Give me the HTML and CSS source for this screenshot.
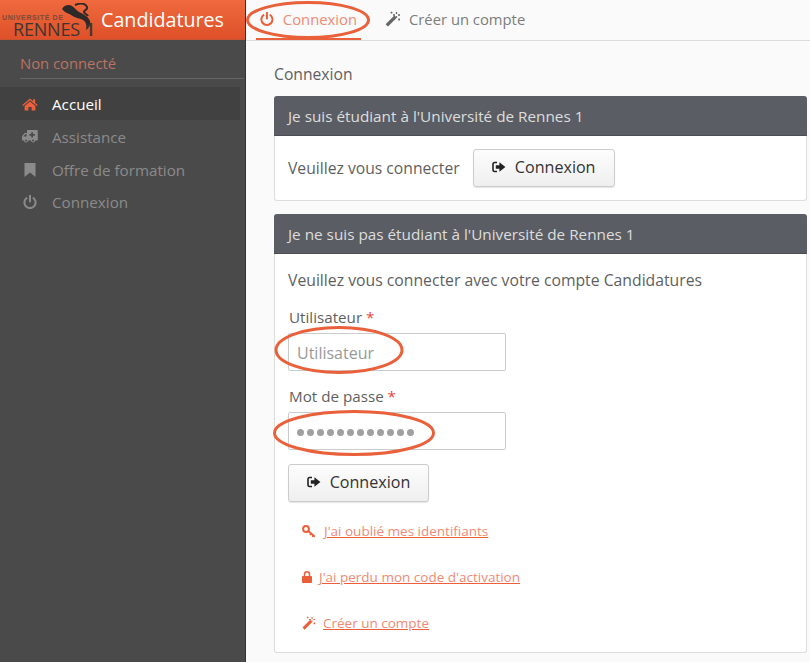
FILE: index.html
```html
<!DOCTYPE html>
<html lang="fr">
<head>
<meta charset="utf-8">
<title>Candidatures - Connexion</title>
<link rel="stylesheet" href="styles.css">
</head>
<body>
<svg class="sprites" width="0" height="0" aria-hidden="true">
  <symbol id="i-power" viewBox="0 0 14 14"><path d="M4.2 2.6A5.6 5.6 0 1 0 9.8 2.6" fill="none" stroke="currentColor" stroke-width="2"/><path d="M7 .4V6.6" fill="none" stroke="currentColor" stroke-width="2" stroke-linecap="round"/></symbol>
  <symbol id="i-wand" viewBox="0 0 16 16"><path d="M1.800 14.400 10.600 5.600" fill="none" stroke="currentColor" stroke-width="3.400"/><path d="M11.500 1v2M11.500 5v1.500M8 4h2M13 4h2M14 7.500v2M6.500.8v1.800M5.600 1.700h1.800M13.200 8.500h1.800" fill="none" stroke="currentColor" stroke-width="1.300"/></symbol>
  <symbol id="i-signin" viewBox="0 0 14 12"><path d="M5 1.500H2.600C1.600 1.500 1 2.200 1 3.100v5.800c0 .9.6 1.600 1.600 1.600H5" fill="none" stroke="currentColor" stroke-width="1.600"/><path d="M3.800 4.200H7.400V1.200L13.400 6 7.400 10.800V7.800H3.800Z" fill="currentColor"/></symbol>
  <symbol id="i-home" viewBox="0 0 16 13"><path d="M8 .5.3 6.900l.8 1L8 2.300l6.900 5.600.8-1-2.600-2.100V1.200h-2v2Z" fill="currentColor"/><path d="M2.600 8 8 3.600 13.400 8v4.600H9.600V9H6.400v3.600H2.600Z" fill="currentColor"/></symbol>
  <symbol id="i-ambulance" viewBox="0 0 16 13"><path d="M5 0h9.600c.7 0 1.200.5 1.200 1.200v8.600c0 .4-.3.7-.7.7h-2a2 2 0 0 1-4 0H6a2 2 0 0 1-4 0H.8A.8.8 0 0 1 0 9.700V6.300L2.600 3H5Z" fill="currentColor"/><path d="M9.200 2.200h1.800V4h1.800v1.800H11v1.800H9.200V5.800H7.400V4h1.800Z" fill="#4a4a4a"/><path d="M1.500 6.400 3.100 4.300H4.600V6.400Z" fill="#4a4a4a"/><circle cx="4" cy="10.500" r="1" fill="#4a4a4a"/><circle cx="11" cy="10.500" r="1" fill="#4a4a4a"/></symbol>
  <symbol id="i-bookmark" viewBox="0 0 12 14"><path d="M.5 0h11v14L6 9.600.5 14Z" fill="currentColor"/></symbol>
  <symbol id="i-key" viewBox="0 0 14 13"><circle cx="4" cy="4" r="2.900" fill="none" stroke="currentColor" stroke-width="2"/><path d="M6.200 6 12.800 11.800" fill="none" stroke="currentColor" stroke-width="2"/><path d="M9.200 8.400 8 10M11.400 10.200 10.200 11.800" fill="none" stroke="currentColor" stroke-width="1.500"/></symbol>
  <symbol id="i-lock" viewBox="0 0 10 12"><path d="M2.500 5V3.300a2.500 2.500 0 0 1 5 0V5" fill="none" stroke="currentColor" stroke-width="1.500"/><rect y="5" width="10" height="7" rx=".8" fill="currentColor"/></symbol>
</svg>

<aside class="sidebar">
  <div class="brand">
    <div class="logo">
      <svg class="salamander" viewBox="0 0 32 27" aria-hidden="true"><path d="M1 6C3 2 8 1 11 3c3 2 4 4 7 6 4 2 9 4 11 9 1 4-1 7-4 9 1-5 0-8-3-10-4-2-8-2-12-5C7 10 4 10 1 6Z" fill="#2e2a2a"/><path d="M14 2c5-2 10-2 12 2 1 3-3 3-3 5 0 2 3 2 4 4" fill="none" stroke="#2e2a2a" stroke-width="2"/></svg>
      <span class="logo-top">UNIVERSITÉ DE</span>
      <span class="logo-bottom">RENNES<b>1</b></span>
    </div>
    <span class="brand-name">Candidatures</span>
  </div>
  <div class="user">Non connecté</div>
  <nav class="side-nav">
    <a class="side-item active"><svg class="side-icon home"><use href="#i-home"/></svg>Accueil</a>
    <a class="side-item"><svg class="side-icon"><use href="#i-ambulance"/></svg>Assistance</a>
    <a class="side-item"><svg class="side-icon mark"><use href="#i-bookmark"/></svg>Offre de formation</a>
    <a class="side-item"><svg class="side-icon pow"><use href="#i-power"/></svg>Connexion</a>
  </nav>
</aside>

<div class="content">
  <header class="topbar">
    <a class="tab current"><svg class="tab-icon pow"><use href="#i-power"/></svg>Connexion
      <svg class="ring ring-tab" viewBox="0 0 124 38" aria-hidden="true"><ellipse cx="62" cy="19" rx="60.500" ry="17.500"/></svg>
    </a>
    <a class="tab"><svg class="tab-icon"><use href="#i-wand"/></svg>Créer un compte</a>
  </header>

  <main class="main">
    <h1 class="title">Connexion</h1>

    <section class="panel">
      <h2 class="panel-head">Je suis étudiant à l'Université de Rennes 1</h2>
      <div class="panel-body row">
        <span>Veuillez vous connecter</span>
        <button class="btn" type="button"><svg class="btn-icon"><use href="#i-signin"/></svg>Connexion</button>
      </div>
    </section>

    <section class="panel">
      <h2 class="panel-head">Je ne suis pas étudiant à l'Université de Rennes 1</h2>
      <div class="panel-body form">
        <p class="intro">Veuillez vous connecter avec votre compte Candidatures</p>
        <label class="label">Utilisateur <em>*</em></label>
        <div class="field">
          <div class="input placeholder">Utilisateur</div>
          <svg class="ring ring-user" viewBox="0 0 132 48" aria-hidden="true"><ellipse cx="66" cy="24" rx="63" ry="22.500"/></svg>
        </div>
        <label class="label second">Mot de passe <em>*</em></label>
        <div class="field">
          <div class="input dots"><i></i><i></i><i></i><i></i><i></i><i></i><i></i><i></i><i></i><i></i><i></i><i></i></div>
          <svg class="ring ring-pass" viewBox="0 0 164 46" aria-hidden="true"><ellipse cx="82" cy="23" rx="79.500" ry="21.500"/></svg>
        </div>
        <button class="btn submit" type="button"><svg class="btn-icon"><use href="#i-signin"/></svg>Connexion</button>
        <ul class="links">
          <li><svg class="link-icon key"><use href="#i-key"/></svg><a>J'ai oublié mes identifiants</a></li>
          <li><svg class="link-icon lock"><use href="#i-lock"/></svg><a>J'ai perdu mon code d'activation</a></li>
          <li><svg class="link-icon wand"><use href="#i-wand"/></svg><a>Créer un compte</a></li>
        </ul>
      </div>
    </section>
  </main>
</div>
</body>
</html>
```
FILE: styles.css
```css
* { box-sizing: border-box; }
html, body { height: 100%; }
body {
  margin: 0;
  height: 662px;
  overflow: hidden;
  display: flex;
  font-family: "Open Sans", "Liberation Sans", sans-serif;
  font-size: 15px;
  color: #5f5f5f;
  background: #fafafa;
}
.sprites { position: absolute; }

/* Sidebar */
.sidebar {
  width: 246px;
  flex: none;
  background: #4a4a4a;
  border-right: 1px solid #333;
}
.brand {
  height: 40px;
  display: flex;
  align-items: center;
  background: linear-gradient(#ef6a3e, #de5029);
  border-bottom: 1px solid #c9532f;
}
.logo {
  position: relative;
  width: 101px;
  height: 39px;
  flex: none;
}
.salamander { position: absolute; left: 61px; top: 3px; width: 32px; height: 27px; }
.logo-top {
  position: absolute;
  left: 2px;
  top: 14px;
  font-family: "Liberation Sans", sans-serif;
  font-size: 7px;
  font-weight: 700;
  line-height: 8px;
  letter-spacing: .6px;
  white-space: nowrap;
  color: #7d4a38;
}
.logo-bottom {
  position: absolute;
  left: 13px;
  top: 22px;
  font-family: "Open Sans", sans-serif;
  font-size: 18px;
  line-height: 15px;
  letter-spacing: -.2px;
  white-space: nowrap;
  color: #3d3533;
}
.logo-bottom b { font-weight: 600; margin-left: 5px; }
.brand-name { font-size: 19.700px; color: #fff; }
.user {
  margin: 12px 1px 0 20px;
  height: 27px;
  line-height: 23px;
  color: #bb7362;
  border-bottom: 1px solid #666;
  font-size: 14.800px;
}
.side-nav { margin-top: 8px; }
.side-item {
  height: 32.700px;
  padding-top: 1px;
  display: flex;
  align-items: center;
  padding-left: 22px;
  color: #8b8b8b;
  font-size: 15.200px;
}
.side-item.active { color: #fff; background: #414141; margin-right: 5px; height: 33px; }
.side-icon { width: 16px; height: 13px; margin-right: 14px; color: #8b8b8b; }
.side-icon.home { color: #ee6039; }
.side-icon.mark { width: 12px; height: 14px; margin: 0 16px 0 2px; }
.side-icon.pow { width: 14px; height: 14px; margin: 0 15px 0 1px; }

/* Top tabs */
.content { flex: 1; min-width: 0; }
.topbar {
  height: 41px;
  display: flex;
  padding-left: 10px;
  background: #fafafa;
  border-bottom: 1px solid #ddd;
}
.tab {
  position: relative;
  display: flex;
  align-items: center;
  height: 40px;
  padding: 0 4px 2px;
  color: #7d7d7d;
  font-size: 14.800px;
  margin-right: 20px;
}
.tab.current {
  color: #f08a75;
  width: 105px;
  border-bottom: 2px solid #e9603a;
  padding-bottom: 0;
}
.tab-icon { width: 16px; height: 16px; margin-right: 8px; color: #666; }
.tab-icon.pow { width: 14px; height: 14px; margin-right: 9px; color: #ea5f3a; }
.ring { position: absolute; fill: none; stroke: #e9603a; stroke-width: 3; pointer-events: none; }
.ring-tab { left: -10px; top: 1px; width: 124px; height: 38px; }

/* Main */
.main { padding: 23px 3px 0 28px; }
.title { margin: 0 0 12px; font-size: 15.700px; line-height: 20px; font-weight: 400; }
.panel {
  background: #fff;
  border: 1px solid #ddd;
  border-top: 0;
  border-radius: 3px;
  margin-bottom: 13px;
}
.panel-head {
  margin: 0 -1px;
  height: 40px;
  padding-left: 14px;
  line-height: 41px;
  font-size: 15.300px;
  font-weight: 400;
  color: #ddd;
  background: #5b5d64;
  border-bottom: 1px solid #4c4e54;
  border-radius: 3px 3px 0 0;
}
.panel-body { padding: 13px; }
.row { display: flex; align-items: center; gap: 13px; height: 64px; font-size: 15.700px; }
.btn {
  display: flex;
  align-items: center;
  justify-content: center;
  width: 142px;
  height: 38px;
  padding: 0 0 2px;
  border: 1px solid #ccc;
  border-radius: 3px;
  background: linear-gradient(#fdfdfd, #efefef);
  box-shadow: 0 1px 1px rgba(0,0,0,.1);
  font-family: inherit;
  font-size: 16.100px;
  color: #333;
}
.btn-icon { width: 14px; height: 12px; margin-right: 9px; color: #222; }
.form { height: 398px; padding: 13px 13px 0; }
.intro { margin: 3px 0 0; height: 20px; line-height: 20px; font-size: 15.750px; }
.label { display: block; margin: 17px 0 0 1px; height: 20px; line-height: 20px; font-size: 15.200px; }
.label.second { margin-top: 15px; }
.label em { font-style: normal; color: #e9463a; }
.field { position: relative; width: 217px; margin: 6px 0 0 0; }
.input {
  width: 218px;
  height: 38px;
  padding: 0 8px;
  border: 1px solid #ccc;
  border-radius: 2px;
  background: #fff;
  display: flex;
  align-items: center;
}
.placeholder { color: #999; font-size: 16px; padding-top: 2px; }
.dots { gap: 3px; padding-top: 3px; }
.dots i { width: 7px; height: 7px; border-radius: 50%; background: #a0a0a0; }
.ring-user { left: -15px; top: -7px; width: 132px; height: 48px; }
.ring-pass { left: -16px; top: -2px; width: 164px; height: 46px; }
.submit { margin-top: 14px; width: 141px; }
.links { list-style: none; margin: 0; padding: 0 0 0 14px; }
.links li { height: 46px; display: flex; align-items: center; }
.links li:first-child { margin-top: 6px; }
.links a { color: #f08a75; text-decoration: underline; text-decoration-color: #e9603a; font-size: 13.500px; }
.link-icon { color: #ea5f3a; }
.link-icon.key { width: 14px; height: 13px; margin-right: 8px; }
.link-icon.lock { width: 10px; height: 12px; margin-right: 7px; }
.link-icon.wand { width: 14px; height: 14px; margin-right: 7px; }
```
